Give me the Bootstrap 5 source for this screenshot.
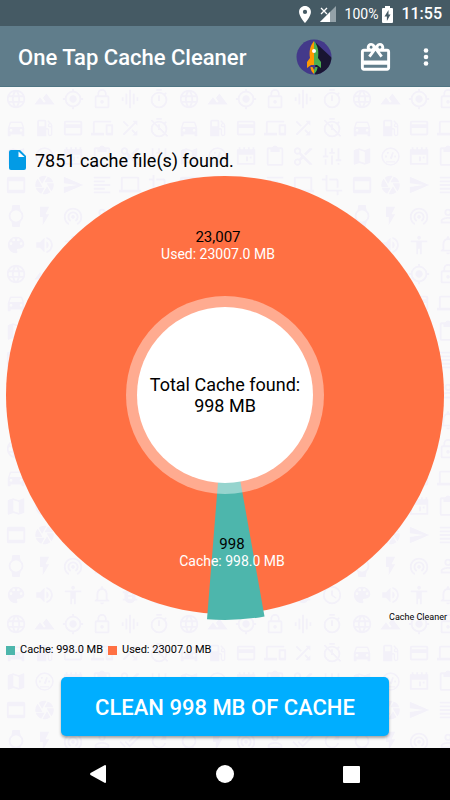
<!DOCTYPE html>
<html lang="en">
<head>
<meta charset="utf-8">
<meta name="viewport" content="width=device-width, initial-scale=1">
<title>One Tap Cache Cleaner</title>
<link rel="stylesheet" href="https://cdn.jsdelivr.net/npm/bootstrap@5.3.0/dist/css/bootstrap.min.css">
<style>
body{font-family:Roboto,"Liberation Sans",sans-serif;background:#fafafa;color:#000}
.status-strip{background:#455a64;height:26px;font-size:16px;line-height:26px;padding:2px 8px 0 0}
.status-strip .charge{font-size:14px}
.app-bar{background:#607d8b;height:61px;border-bottom:1px solid #507583;padding-top:2px}
.app-title{font-size:22px;line-height:28px;font-weight:500;padding:2px 0 0 18px}
.bar-btn{background:none;border:0;padding:0;line-height:0;color:#fff}
.tools{gap:26px;padding-right:17px}
.wallpaper{position:absolute;inset:0;width:100%;height:100%;z-index:-1}
.stage{isolation:isolate;position:relative;overflow:hidden}
.found-row{padding:60px 9px 0;font-size:18px;line-height:26px;gap:9px}
.found-row span{padding-top:2px;line-height:24px}
.legend-row{font-size:11px;line-height:14px;padding:2px 0 0 6px;gap:5px}
.key{width:9px;height:9px}
.key-cache{background:#4db6ac}
.key-used{background:#ff7043}
.clean-wrap{padding:20px 61px 12px}
.clean-btn,.clean-btn:hover{background:#00aeff;color:#fff;border:0;border-radius:5px;height:59px;font-size:22px;font-weight:500;line-height:28px;padding:2px 0 0;box-shadow:0 2px 3px rgba(0,0,0,.35)}
.nav-strip{background:#000;height:52px;padding:0 41px}
.nav-strip .bar-btn{width:114px}
</style>
<script src="https://cdn.jsdelivr.net/npm/bootstrap@5.3.0/dist/js/bootstrap.bundle.min.js"></script>
</head>
<body>
<div class="d-flex flex-column min-vh-100">
<div class="status-strip d-flex align-items-center justify-content-end text-white">
  <svg width="12" height="17" viewBox="0 0 14 20" fill="#fff" aria-hidden="true"><path fill-rule="evenodd" d="M7 0C3.1 0 0 3.1 0 7c0 5.200 7 13 7 13s7-7.800 7-13c0-3.900-3.100-7-7-7zm0 9.500a2.500 2.500 0 1 1 0-5 2.500 2.500 0 0 1 0 5z"/></svg>
  <svg class="ms-2" width="18" height="17" viewBox="0 0 18 17" aria-hidden="true"><path fill="#93a1a8" d="M17 0v16H1z"/><path fill="#fff" d="M11 6v10H1z"/><path stroke="#fff" stroke-width="1.300" d="M2 2l6 6M8 2L2 8"/></svg>
  <span class="charge ms-2">100%</span>
  <svg class="ms-1" width="11" height="17" viewBox="0 0 11 17" aria-hidden="true"><path fill="#fff" d="M3 0h5v2h2q1 0 1 1v13q0 1-1 1H1q-1 0-1-1V3q0-1 1-1h2z"/><path fill="#455a64" d="M6.500 4L2.500 10.500h2.400V15L8.500 8.500H6.500z"/></svg>
  <span class="fw-medium ms-2 clock">11:55</span>
</div>
<header class="app-bar d-flex align-items-center justify-content-between text-white">
  <h1 class="app-title m-0">One Tap Cache Cleaner</h1>
  <div class="tools d-flex align-items-center">
    <button type="button" class="bar-btn" aria-label="Boost">
      <svg width="36" height="36" viewBox="0 0 36 36"><defs><clipPath id="disc"><circle cx="18" cy="18" r="17.500"/></clipPath></defs><circle cx="18" cy="18" r="17.500" fill="#43398a"/><path clip-path="url(#disc)" fill="#191532" d="M20 4L38 21v17H19z"/><path fill="#ff9800" d="M18 2c-4 5-5 10-4 17l-3 4v6l4-3h3z"/><path fill="#4caf50" d="M18 2c4 5 5 10 4 17l3 4v6l-4-3h-3z"/><circle cx="18" cy="12" r="2" fill="#fff"/><path fill="#ff9800" d="M14.500 28H18v7c-2-2-3.500-4-3.500-7z"/><path fill="#4caf50" d="M18 28h3.500c0 3-1.500 5-3.500 7z"/><path fill="#43398a" d="M16.500 28h3L18 31z"/></svg>
    </button>
    <button type="button" class="bar-btn" aria-label="Gifts">
      <svg width="35" height="35" viewBox="0 0 24 24" fill="#fff"><path d="M20 6h-2.180c.11-.31.18-.65.18-1 0-1.660-1.340-3-3-3-1.050 0-1.960.54-2.500 1.350l-.5.670-.5-.68C10.960 2.540 10.050 2 9 2 7.340 2 6 3.340 6 5c0 .35.07.69.18 1H4c-1.110 0-1.990.89-1.990 2L2 19c0 1.110.89 2 2 2h16c1.110 0 2-.89 2-2V8c0-1.110-.89-2-2-2zm-5-2c.55 0 1 .45 1 1s-.45 1-1 1-1-.45-1-1 .45-1 1-1zM9 4c.55 0 1 .45 1 1s-.45 1-1 1-1-.45-1-1 .45-1 1-1zm11 15H4v-2h16v2zm0-5H4V8h5.080L7 10.830 8.620 12 11 8.760l1-1.360 1 1.360L15.380 12 17 10.830 14.920 8H20v6z"/></svg>
    </button>
    <button type="button" class="bar-btn" aria-label="More options">
      <svg width="14" height="20" viewBox="0 0 14 20" fill="#fff"><circle cx="7" cy="3.500" r="2.300"/><circle cx="7" cy="10" r="2.300"/><circle cx="7" cy="16.500" r="2.300"/></svg>
    </button>
  </div>
</header>
<main class="stage flex-grow-1 d-flex flex-column">
  <svg class="wallpaper" aria-hidden="true">
    <defs>
      <pattern id="doodles" width="173" height="175" patternUnits="userSpaceOnUse" patternTransform="translate(2 0)">
        <g fill="#f3f1f9">
          <path transform="translate(3 1) scale(.92)" d="M11.990 2C6.470 2 2 6.480 2 12s4.470 10 9.990 10C17.520 22 22 17.520 22 12S17.520 2 11.990 2zm6.930 6h-2.950c-.32-1.250-.78-2.450-1.380-3.560 1.840.63 3.370 1.910 4.330 3.560zM12 4.040c.83 1.200 1.480 2.530 1.910 3.960h-3.820c.43-1.430 1.080-2.760 1.910-3.960zM4.260 14C4.100 13.360 4 12.690 4 12s.1-1.360.26-2h3.380c-.08.66-.14 1.320-.14 2s.06 1.340.14 2H4.260zm.82 2h2.950c.32 1.250.78 2.450 1.380 3.560-1.840-.63-3.370-1.900-4.330-3.560zm2.950-8H5.080c.96-1.660 2.490-2.930 4.330-3.560C8.810 5.550 8.350 6.750 8.030 8zM12 19.960c-.83-1.200-1.480-2.530-1.910-3.960h3.820c-.43 1.430-1.080 2.760-1.910 3.960zM14.340 14H9.660c-.09-.66-.16-1.320-.16-2s.07-1.350.16-2h4.680c.09.65.16 1.320.16 2s-.07 1.340-.16 2zm.25 5.560c.6-1.110 1.060-2.310 1.380-3.560h2.950c-.96 1.650-2.490 2.930-4.330 3.560zM16.360 14c.08-.66.14-1.320.14-2s-.06-1.340-.14-2h3.380c.16.64.26 1.310.26 2s-.1 1.360-.26 2h-3.380z"/>
          <path transform="translate(31.500 1) scale(.92)" d="M14 6l-3.750 5 2.850 3.800-1.600 1.200C9.810 13.750 7 10 7 10l-6 8h22L14 6z"/>
          <path transform="translate(60 1) scale(.92)" d="M12 8c-2.210 0-4 1.790-4 4s1.790 4 4 4 4-1.790 4-4-1.790-4-4-4zm8.940 3A8.994 8.994 0 0 0 13 3.060V1h-2v2.060A8.994 8.994 0 0 0 3.060 11H1v2h2.060A8.994 8.994 0 0 0 11 20.940V23h2v-2.060A8.994 8.994 0 0 0 20.940 13H23v-2h-2.060zM12 19c-3.870 0-7-3.130-7-7s3.130-7 7-7 7 3.130 7 7-3.130 7-7 7z"/>
          <path transform="translate(89 1) scale(.92)" d="M12 17c1.100 0 2-.9 2-2s-.9-2-2-2-2 .9-2 2 .9 2 2 2zm6-9h-1V6c0-2.760-2.240-5-5-5S7 3.240 7 6v2H6c-1.100 0-2 .9-2 2v10c0 1.100.9 2 2 2h12c1.100 0 2-.9 2-2V10c0-1.100-.9-2-2-2zM8.900 6c0-1.710 1.390-3.100 3.100-3.100s3.100 1.390 3.100 3.100v2H8.900V6zM18 20H6V10h12v10z"/>
          <path transform="translate(117 1) scale(.92)" d="M7 18h2V6H7v12zm4 4h2V2h-2v20zm-8-8h2v-4H3v4zm12 4h2V6h-2v12zm4-8v4h2v-4h-2z"/>
          <path id="stopwatch" transform="translate(146 1) scale(.92)" d="M15 1H9v2h6V1zm-4 13h2V8h-2v6zm8.030-6.610l1.420-1.420c-.43-.51-.9-.99-1.410-1.410l-1.420 1.420A8.962 8.962 0 0 0 12 4c-4.970 0-9 4.030-9 9s4.020 9 9 9a8.994 8.994 0 0 0 7.030-14.610zM12 20c-3.870 0-7-3.130-7-7s3.130-7 7-7 7 3.130 7 7-3.130 7-7 7z"/>
          <path transform="translate(3 30) scale(.92)" d="M18.920 6.010C18.720 5.420 18.160 5 17.500 5h-11c-.66 0-1.210.42-1.420 1.010L3 12v8c0 .55.45 1 1 1h1c.55 0 1-.45 1-1v-1h12v1c0 .55.45 1 1 1h1c.55 0 1-.45 1-1v-8l-2.080-5.990zM6.500 16c-.83 0-1.500-.67-1.500-1.500S5.670 13 6.500 13s1.500.67 1.500 1.500S7.330 16 6.500 16zm11 0c-.83 0-1.500-.67-1.500-1.500s.67-1.500 1.500-1.500 1.500.67 1.500 1.500-.67 1.500-1.500 1.500zM5 11l1.500-4.500h11L19 11H5z"/>
          <path transform="translate(31.500 30) scale(.92)" d="M19.770 7.230l.01-.01-3.720-3.720L15 4.560l2.110 2.110c-.94.36-1.610 1.260-1.610 2.330 0 1.380 1.120 2.500 2.500 2.500.36 0 .69-.08 1-.21v7.210c0 .55-.45 1-1 1s-1-.45-1-1V14c0-1.100-.9-2-2-2h-1V5c0-1.100-.9-2-2-2H6c-1.100 0-2 .9-2 2v16h10v-7.500h1.500v5c0 1.380 1.120 2.500 2.500 2.500s2.500-1.120 2.500-2.500V9c0-.69-.28-1.320-.73-1.770zM12 10H6V5h6v5zm6 0c-.55 0-1-.45-1-1s.45-1 1-1 1 .45 1 1-.45 1-1 1z"/>
          <path transform="translate(60 30) scale(.92)" d="M20 4H4c-1.110 0-1.990.89-1.990 2L2 18c0 1.110.89 2 2 2h16c1.110 0 2-.89 2-2V6c0-1.110-.89-2-2-2zm0 14H4v-6h16v6zm0-10H4V6h16v2z"/>
          <path transform="translate(89 30) scale(.92)" d="M4 6h18V4H4c-1.100 0-2 .9-2 2v11H0v3h14v-3H4V6zm19 2h-6c-.55 0-1 .45-1 1v10c0 .55.45 1 1 1h6c.55 0 1-.45 1-1V9c0-.55-.45-1-1-1zm-1 9h-4v-7h4v7z"/>
          <path transform="translate(117 30) scale(.92)" d="M10.590 9.170L5.410 4 4 5.410l5.170 5.170 1.420-1.410zM14.500 4l2.040 2.040L4 18.590 5.410 20 17.960 7.460 20 9.500V4h-5.500zm.33 9.410l-1.410 1.410 3.130 3.130L14.500 20H20v-5.500l-2.040 2.040-3.130-3.130z"/>
          <use href="#stopwatch" y="29"/><path transform="translate(146 30) scale(.92)" d="M3 4l1.300-1.300L22 20.400l-1.300 1.300z"/>
          <path transform="translate(3 58.500) scale(.92)" d="M20.500 3l-.16.030L15 5.100 9 3 3.360 4.900c-.21.07-.36.25-.36.480V20.500c0 .28.22.5.5.5l.16-.03L9 18.900l6 2.100 5.640-1.900c.21-.07.36-.25.36-.48V3.500c0-.28-.22-.5-.5-.5zM15 19l-6-2.110V5l6 2.110V19z"/>
          <path fill-rule="evenodd" transform="translate(31.500 58.500) scale(.92)" d="M12 2a10 10 0 1 0 0 20 10 10 0 0 0 0-20zm0 1.700a8.300 8.300 0 1 1 0 16.600 8.300 8.300 0 0 1 0-16.600zM7 17h10v1.500H7zM11 14l3-7 1.500.6-2 7zM6 11h2v2H6zM8 7h2v2H8zM16 11h2v2h-2z"/>
          <path transform="translate(60 58.500) scale(.92)" fill-rule="evenodd" d="M2 4h2V2h2v2h3V2h2v2h3V2h2v2h3V2h2v2h1v17H2zm2 6v9h16v-9zm8 2h2v5h-2zm4 0h2v2h-2z"/>
          <path transform="translate(89 58.500) scale(.92)" d="M19 2h-4.180C14.400.84 13.300 0 12 0S9.600.84 9.180 2H5c-1.100 0-2 .9-2 2v16c0 1.100.9 2 2 2h14c1.100 0 2-.9 2-2V4c0-1.100-.9-2-2-2zm0 18H5V4h2v3h10V4h2v16z"/>
          <path transform="translate(117 58.500) scale(.92)" d="M9.640 7.640c.23-.5.360-1.050.36-1.640 0-2.210-1.790-4-4-4S2 3.790 2 6s1.790 4 4 4c.59 0 1.140-.13 1.640-.36L10 12l-2.360 2.360C7.140 14.130 6.590 14 6 14c-2.210 0-4 1.790-4 4s1.790 4 4 4 4-1.790 4-4c0-.59-.13-1.140-.36-1.640L12 14l7 7h3v-1L9.640 7.640zM6 8c-1.100 0-2-.89-2-2s.9-2 2-2 2 .89 2 2-.9 2-2 2zm0 12c-1.100 0-2-.89-2-2s.9-2 2-2 2 .89 2 2-.9 2-2 2zM19 3l-6 6 2 2 7-7V3z"/>
          <path transform="translate(146 58.500) scale(.92)" d="M4 3h2v8h2v2H2v-2h2zM4 15h2v6H4zM11 3h2v4h2v2H9V7h2zM11 11h2v10h-2zM18 3h2v12h2v2h-6v-2h2zM18 19h2v2h-2z"/>
          <path transform="translate(3 87) scale(.92)" d="M20 3H4c-1.100 0-2 .9-2 2v14c0 1.100.9 2 2 2h16c1.100 0 2-.9 2-2V5c0-1.100-.9-2-2-2zm0 14H4V8h16v9z"/>
          <path transform="translate(31.500 87) scale(.92)" d="M9.400 10.500l4.770-8.260C13.470 2.090 12.750 2 12 2c-2.400 0-4.600.85-6.320 2.250l3.660 6.350.06-.1zM21.540 9c-.92-2.920-3.150-5.260-6-6.340L11.880 9h9.660zm.26 1h-7.490l.29.5 4.760 8.250C21 16.970 22 14.610 22 12c0-.69-.07-1.350-.2-2zM8.540 12l-3.900-6.750C3.010 7.030 2 9.390 2 12c0 .69.070 1.350.2 2h7.490l-1.150-2zm-6.080 3c.92 2.920 3.150 5.260 6 6.340L12.120 15H2.460zm11.270 0l-3.900 6.760c.7.150 1.420.24 2.170.24 2.400 0 4.600-.85 6.320-2.250l-3.660-6.350-.93 1.600z"/>
          <path transform="translate(60 87) scale(.92)" d="M2.010 21L23 12 2.010 3 2 10l15 2-15 2z"/>
          <path transform="translate(89 87) scale(.92)" d="M3 3h18v2H3zM3 7h12v2H3zM3 11h18v2H3zM3 15h12v2H3zM3 19h18v2H3z"/>
          <path transform="translate(117 87) scale(.92)" fill-rule="evenodd" d="M2 4q0-1 2-1h16q2 0 2 1v13h2v3H0v-3h2zm2 1v12h16V5z"/>
          <path transform="translate(146 87) scale(.92)" d="M17 15h2V7c0-1.100-.9-2-2-2H9v2h8v8zM7 17V1H5v4H1v2h4v10c0 1.100.9 2 2 2h10v4h2v-4h4v-2H7z"/>
          <path transform="translate(3 118) scale(.92)" d="M20 12c0-2.540-1.190-4.810-3.040-6.270L16 0H8l-.95 5.730C5.190 7.190 4 9.450 4 12s1.190 4.810 3.050 6.270L8 24h8l.96-5.730A7.976 7.976 0 0 0 20 12zM6 12c0-3.310 2.690-6 6-6s6 2.690 6 6-2.690 6-6 6-6-2.690-6-6z"/>
          <path transform="translate(31.500 118) scale(.92)" d="M7 2v11h3v9l7-12h-4l4-8z"/>
          <path transform="translate(60 118) scale(.92)" d="M12 11c-1.100 0-2 .9-2 2s.9 2 2 2 2-.9 2-2-.9-2-2-2zm6 2c0-3.310-2.690-6-6-6s-6 2.690-6 6c0 2.220 1.210 4.150 3 5.190l1-1.740c-1.190-.7-2-1.970-2-3.450 0-2.210 1.790-4 4-4s4 1.790 4 4c0 1.480-.81 2.750-2 3.450l1 1.740c1.790-1.040 3-2.970 3-5.190zM12 3C6.480 3 2 7.480 2 13c0 3.700 2.010 6.920 4.990 8.650l1-1.730C5.610 18.530 4 15.960 4 13c0-4.420 3.580-8 8-8s8 3.580 8 8c0 2.960-1.610 5.530-4 6.920l1 1.730c2.990-1.730 5-4.950 5-8.650 0-5.520-4.480-10-10-10z"/>
          <path transform="translate(89 118) scale(.92)" fill-rule="evenodd" d="M12 4a4 4 0 1 0 0 8 4 4 0 0 0 0-8zm0 2a2 2 0 1 1 0 4 2 2 0 0 1 0-4zM12 13c-3 0-8 1.500-8 4v3h16v-3c0-2.500-5-4-8-4zm0 2c3 0 6 1.200 6 2v1H6v-1c0-.8 3-2 6-2z"/>
          <path transform="translate(117 118) scale(.92)" d="M18 7l-1.410-1.410-6.340 6.340 1.410 1.410L18 7zm4.240-1.410L11.660 16.170 7.480 12l-1.410 1.410L11.660 19l12-12-1.420-1.410zM.41 13.410L6 19l1.410-1.410L1.830 12 .41 13.410z"/>
          <path transform="translate(146 118) scale(.92)" d="M17.650 6.350A7.958 7.958 0 0 0 12 4a8 8 0 1 0 7.730 10h-2.080A6 6 0 1 1 12 6c1.660 0 3.140.69 4.220 1.780L13 11h7V4l-2.350 2.350z"/>
          <path transform="translate(3 147) scale(.92)" d="M12 3a9 9 0 0 0 0 18c.83 0 1.500-.67 1.500-1.500 0-.39-.15-.74-.39-1.010-.23-.26-.38-.61-.38-.99 0-.83.67-1.500 1.500-1.500H16c2.760 0 5-2.240 5-5 0-4.420-4.030-8-9-8zm-5.500 9a1.500 1.500 0 1 1 0-3 1.500 1.500 0 0 1 0 3zm3-4a1.500 1.500 0 1 1 0-3 1.500 1.500 0 0 1 0 3zm5 0a1.500 1.500 0 1 1 0-3 1.500 1.500 0 0 1 0 3zm3 4a1.500 1.500 0 1 1 0-3 1.500 1.500 0 0 1 0 3z"/>
          <path transform="translate(31.500 147) scale(.92)" d="M3 9v6h4l5 5V4L7 9H3zm13.500 3c0-1.770-1.020-3.290-2.500-4.030v8.050c1.480-.73 2.500-2.250 2.500-4.020zM14 3.230v2.060c2.890.86 5 3.540 5 6.710s-2.110 5.850-5 6.710v2.060c4.010-.91 7-4.490 7-8.770s-2.990-7.860-7-8.770z"/>
          <path transform="translate(60 147) scale(.92)" d="M12 2c1.100 0 2 .9 2 2s-.9 2-2 2-2-.9-2-2 .9-2 2-2zm9 7h-6v13h-2v-6h-2v6H9V9H3V7h18v2z"/>
          <path transform="translate(89 147) scale(.92)" d="M12 22c1.100 0 2-.9 2-2h-4c0 1.100.9 2 2 2zm6-6v-5c0-3.070-1.630-5.640-4.500-6.320V4a1.500 1.500 0 0 0-3 0v.68C7.640 5.360 6 7.920 6 11v5l-2 2v1h16v-1l-2-2zm-2 1H8v-6c0-2.480 1.510-4.500 4-4.500s4 2.020 4 4.500v6z"/>
          <path transform="translate(117 147) scale(.92)" d="M20 8h-2.810a5.985 5.985 0 0 0-1.820-1.960L17 4.410 15.590 3l-2.170 2.170a6 6 0 0 0-2.840 0L8.410 3 7 4.410l1.620 1.630C7.880 6.550 7.260 7.220 6.810 8H4v2h2v6H4v2h2.810a6 6 0 0 0 10.380 0H20v-2h-2v-6h2zm-6 8h-4v-2h4v2zm0-4h-4v-2h4v2z"/>
          <path transform="translate(146 147) scale(.92)" fill-rule="evenodd" d="M12 2a10 10 0 1 0 0 20 10 10 0 0 0 0-20zm0 2a8 8 0 1 1 0 16 8 8 0 0 1 0-16zM11 7h2v5l4 3-1 1-5-3.500z"/>
        </g>
      </pattern>
    </defs>
    <rect width="100%" height="100%" fill="url(#doodles)"/>
  </svg>
  <div class="found-row d-flex align-items-center">
    <svg width="17" height="20" viewBox="0 0 17 20" aria-hidden="true"><path fill="#039be5" d="M2 0h9l6 6v12q0 2-2 2H2q-2 0-2-2V2q0-2 2-2z"/><path fill="#fff" d="M9.500 1.500L15.500 7h-6z"/></svg>
    <span>7851 cache file(s) found.</span>
  </div>
  <svg class="d-block w-100" viewBox="0 0 450 468" role="img" aria-label="Cache usage chart">
    <circle cx="225" cy="222" r="219" fill="#ff7043"/>
    <path fill="#4db6ac" d="M225 222L264.500 443.500A225 225 0 0 1 207 446.300z"/>
    <circle cx="225" cy="222" r="99" fill="#fff" fill-opacity=".41"/>
    <circle cx="225" cy="222" r="88" fill="#fff"/>
    <g text-anchor="middle">
      <g font-size="18"><text x="225" y="218">Total Cache found:</text><text x="225" y="239">998 MB</text></g>
      <g font-size="15"><text x="218" y="69">23,007</text><text x="232" y="376">998</text></g>
      <g font-size="14" fill="#fff"><text x="218" y="86">Used: 23007.0 MB</text><text x="232" y="393">Cache: 998.0 MB</text></g>
    </g>
    <text x="447" y="447" font-size="9" text-anchor="end">Cache Cleaner</text>
  </svg>
  <div class="legend-row d-flex align-items-center">
    <span class="key key-cache"></span><span>Cache: 998.0 MB</span>
    <span class="key key-used"></span><span>Used: 23007.0 MB</span>
  </div>
  <div class="clean-wrap mt-auto"><button type="button" class="clean-btn btn w-100">CLEAN 998 MB OF CACHE</button></div>
</main>
<nav class="nav-strip d-flex align-items-center justify-content-between" aria-label="System">
  <button type="button" class="bar-btn" aria-label="Back"><svg width="18" height="18" viewBox="0 0 18 18" fill="#fff"><path d="M16 0q1 0 1 1v16q0 1-1 1L1.500 10q-1-1 0-2z"/></svg></button>
  <button type="button" class="bar-btn" aria-label="Home"><svg width="18" height="18" viewBox="0 0 18 18" fill="#fff"><circle cx="9" cy="9" r="9"/></svg></button>
  <button type="button" class="bar-btn" aria-label="Recent apps"><svg width="18" height="18" viewBox="0 0 18 18" fill="#fff"><rect x="0" y="1" width="17" height="17" rx="1"/></svg></button>
</nav>
</div>
</body>
</html>
